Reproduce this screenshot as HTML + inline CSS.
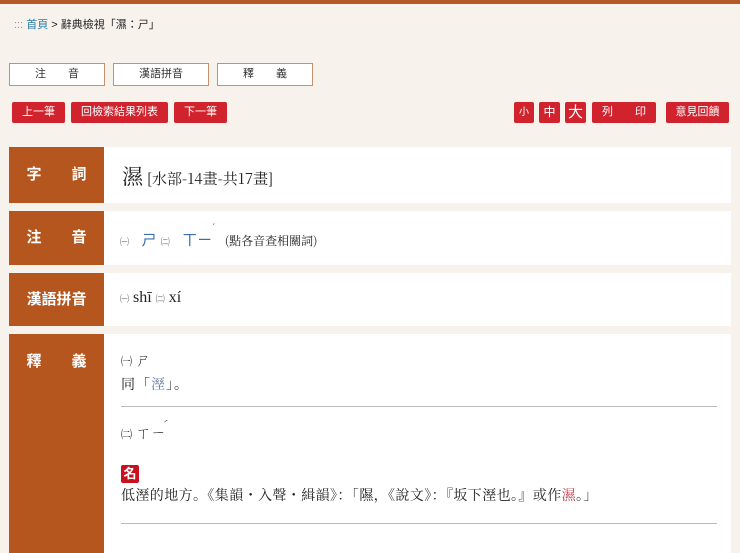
<!DOCTYPE html>
<html><head><meta charset="utf-8"><style>
*{margin:0;padding:0;box-sizing:border-box}
body{width:740px;height:553px;overflow:hidden;background:#f7f2ec;font-family:"Liberation Sans","Noto Sans CJK TC",sans-serif;position:relative}
.top{position:absolute;left:0;top:0;width:740px;height:4px;background:#b5592c}
.a{position:absolute}
.crumb{left:14px;top:16px;font-size:11px;color:#222}
.crumb b{color:#999;font-weight:normal}
.crumb span{color:#2a7fa8}
.tab{top:63px;height:23px;width:96px;background:#fff;border:1px solid #c9906c;font-size:11px;color:#333;text-align:center;line-height:21px}
.btn{top:102px;height:21px;background:#d0232e;color:#fff;font-size:11px;text-align:center;line-height:21px;border-radius:2px}
.lab{left:9px;width:95px;background:#b5561f;color:#fff;font-size:15px;font-weight:bold;text-align:center}
.con{left:104px;width:627px;background:#fff}
.serif{font-family:"Noto Serif CJK SC","Liberation Serif",serif}
.lat{font-family:"Liberation Serif",serif}
.hr{position:absolute;left:121px;width:596px;height:1px;background:#bbb}
.tone{position:relative;display:inline-block}
.tone i{position:absolute;font-style:normal;right:-3px;top:-6px;font-size:10px}
</style></head><body>
<div class="top"></div>
<div class="a crumb"><b>:::</b> <span>首頁</span> &gt; 辭典檢視「濕：ㄕ」</div>
<div class="a tab" style="left:9px">注　　音</div>
<div class="a tab" style="left:113px">漢語拼音</div>
<div class="a tab" style="left:217px">釋　　義</div>
<div class="a btn" style="left:12px;width:53px">上一筆</div>
<div class="a btn" style="left:71px;width:97px">回檢索結果列表</div>
<div class="a btn" style="left:174px;width:53px">下一筆</div>
<div class="a btn" style="left:514px;width:20px;font-size:10px">小</div>
<div class="a btn" style="left:539px;width:21px;font-size:12px">中</div>
<div class="a btn" style="left:565px;width:21px;font-size:15px">大</div>
<div class="a btn" style="left:592px;width:64px">列　　印</div>
<div class="a btn" style="left:666px;width:63px">意見回饋</div>

<div class="a lab" style="top:147px;height:56px;line-height:56px">字　　詞</div>
<div class="a con serif" style="top:147px;height:56px;padding:14px 0 0 18px;font-size:15px;color:#222;white-space:nowrap"><span style="font-size:21px">濕</span> [水部-14畫-共17畫]</div>
<div class="a lab" style="top:211px;height:54px;line-height:54px">注　　音</div>
<div class="a con" style="top:211px;height:54px;padding:18px 0 0 16px;font-size:15px;color:#3a6fa8;white-space:nowrap"><span style="font-size:9px;color:#777">㈠</span>&nbsp;&nbsp; ㄕ <span style="font-size:9px;color:#777">㈡</span>&nbsp;&nbsp; <span class="tone">ㄒㄧ<i>ˊ</i></span>&nbsp;&nbsp; <span class="serif" style="font-size:12px;color:#222">(點各音查相關詞)</span></div>
<div class="a lab" style="top:273px;height:53px;line-height:53px">漢語拼音</div>
<div class="a con lat" style="top:273px;height:53px;padding:16px 0 0 16px;font-size:16px;color:#222"><span style="font-size:9px;color:#777">㈠</span> shī <span style="font-size:9px;color:#777">㈡</span> xí</div>
<div class="a lab" style="top:334px;height:219px;padding-top:18px;line-height:20px">釋　　義</div>
<div class="a con" style="top:334px;height:219px"></div>
<div class="a serif" style="left:121px;top:349px;font-size:15px;color:#222"><span style="font-size:11px">㈠</span> ㄕ</div>
<div class="a serif" style="left:121px;top:374px;font-size:14px;color:#222;letter-spacing:1px">同「<span style="color:#6a7fa0">溼</span>」。</div>
<div class="hr" style="top:406px"></div>
<div class="a serif" style="left:121px;top:422px;font-size:15px;color:#222"><span style="font-size:11px">㈡</span> <span class="tone">ㄒㄧ<i>ˊ</i></span></div>
<div class="a" style="left:121px;top:465px;width:18px;height:18px;background:#c8101e;color:#fff;font-size:13px;font-weight:bold;text-align:center;line-height:18px;border-radius:2px">名</div>
<div class="a serif" style="left:121px;top:485px;font-size:14px;color:#222;white-space:nowrap;letter-spacing:0.4px">低溼的地方。《集韻・入聲・緝韻》：「隰，《說文》：『坂下溼也。』或作<span style="color:#c04050">濕</span>。」</div>
<div class="hr" style="top:523px"></div>
</body></html>
